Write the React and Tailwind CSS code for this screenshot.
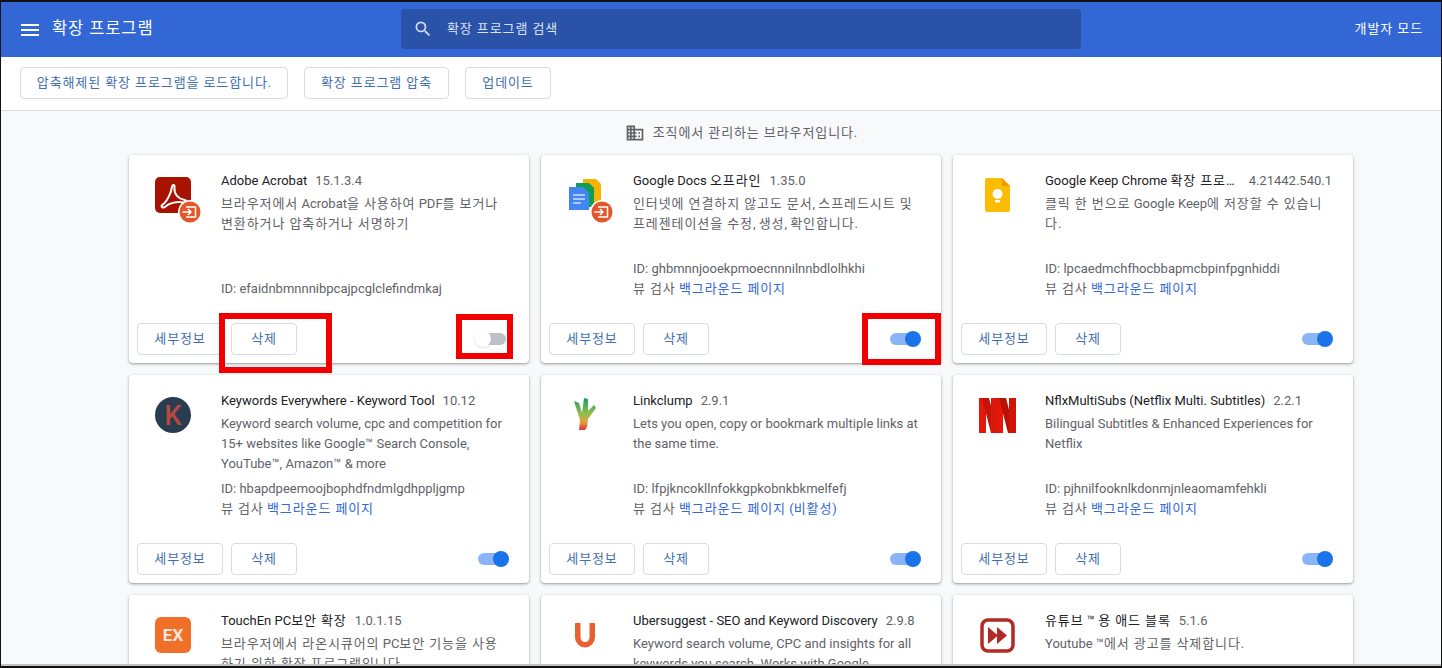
import React from "react";

// Hangul runs render narrower than in the reference, so they get some tracking
const Ko = ({ children }) =>
  String(children)
    .split(/([가-힣]+(?: [가-힣]+)*)/)
    .map((part, i) =>
      i % 2 ? (
        <span key={i} className="tracking-[0.9px]">
          {part}
        </span>
      ) : (
        part
      )
    );

const Badge = () => (
  <g>
    <circle cx="35" cy="35" r="12" fill="#fff" />
    <circle cx="35" cy="35" r="10.5" fill="#e2582c" />
    <path d="M31 30h9.5v10H31" fill="none" stroke="#fff" strokeWidth="1.5" />
    <path d="M27.5 35h8M33 32l3 3-3 3" fill="none" stroke="#fff" strokeWidth="1.5" />
  </g>
);

const AcrobatIcon = () => (
  <svg viewBox="0 0 48 48" className="w-12 h-12 overflow-visible">
    <rect width="36" height="36" rx="5" fill="#a81200" />
    <path
      d="M7 28c4-2 9-11 10-18 .4-3 3-2.500 2.500 1-.8 6 4 11 10 12 3 .5 2.500 3-1 2.500-6-1-14 0-18 4-2.500 2-5 .5-3.500-1.500z"
      fill="none"
      stroke="#fff"
      strokeWidth="2"
    />
    <Badge />
  </svg>
);

const DocsIcon = () => (
  <svg viewBox="0 0 48 48" className="w-12 h-12 overflow-visible">
    <path d="M16 2h13l5 5v19H16z" fill="#f4b400" />
    <path d="M9 6h13l5 5v19H9z" fill="#0f9d58" />
    <path d="M2 10h14l6 6v17H2z" fill="#4285f4" />
    <path d="M6 18h12M6 22h12M6 26h8" stroke="#cfe0fc" strokeWidth="1.500" />
    <Badge />
  </svg>
);

const KeepIcon = () => (
  <svg viewBox="0 0 48 48" className="w-12 h-12">
    <path d="M8 1h15l8 8v24a2 2 0 0 1-2 2H8a2 2 0 0 1-2-2V3a2 2 0 0 1 2-2z" fill="#fbbc04" />
    <path d="M23 1l8 8h-8z" fill="#f29900" />
    <circle cx="18.500" cy="17" r="5" fill="#fff" />
    <rect x="16" y="23" width="5" height="2.500" fill="#fff" />
  </svg>
);

const KeywordsIcon = () => (
  <svg viewBox="0 0 48 48" className="w-12 h-12">
    <circle cx="18" cy="18" r="18" fill="#2a3c50" />
    <text x="18" y="28" textAnchor="middle" fontSize="27" fontWeight="500" fill="#b84a3f" fontFamily="Roboto, sans-serif">
      K
    </text>
  </svg>
);

const LinkclumpIcon = () => (
  <svg viewBox="0 0 48 48" className="w-12 h-12">
    <defs>
      <linearGradient id="clump" x1="0" y1="0" x2="0" y2="1">
        <stop offset="0" stopColor="#1f9a6c" />
        <stop offset="0.5" stopColor="#8fbf4a" />
        <stop offset="0.75" stopColor="#e8a040" />
        <stop offset="1" stopColor="#d8343a" />
      </linearGradient>
    </defs>
    <path
      d="M7 4l5 2 3 10 2-15 4 1 0 12 6-6 2 3-8 11-1 8-2 3-6 0 1-10z"
      fill="url(#clump)"
    />
  </svg>
);

const NflxIcon = () => (
  <svg viewBox="0 0 48 48" className="w-12 h-12">
    <path d="M0 1h7v35H0z" fill="#e3170a" />
    <path d="M3 1h7l9 35h-7z" fill="#c31408" />
    <path d="M12 1h7v35h-7z" fill="#d81a0c" />
    <path d="M17 1h7v35h-7z" fill="#e3170a" />
    <path d="M20 1h7l9 35h-7z" fill="#b81206" />
    <path d="M30 1h7v35h-7z" fill="#d01508" />
  </svg>
);

const TouchEnIcon = () => (
  <svg viewBox="0 0 48 48" className="w-12 h-12">
    <rect width="36" height="36" rx="6" fill="#f0702a" />
    <text x="18" y="24" textAnchor="middle" fontSize="17" fontWeight="700" fill="#f6e6da" fontFamily="Roboto, sans-serif">
      EX
    </text>
  </svg>
);

const UberIcon = () => (
  <svg viewBox="0 0 48 48" className="w-12 h-12">
    <path d="M10.750 6v14.500a7.250 7.250 0 0 0 14.500 0V6" fill="none" stroke="#e8602f" strokeWidth="5.500" />
  </svg>
);

const YoutubeIcon = () => (
  <svg viewBox="0 0 48 48" className="w-12 h-12">
    <rect x="3" y="3" width="31" height="31" rx="6" fill="#fff" stroke="#b02a26" strokeWidth="3.500" />
    <path d="M9 10l10 8.500-10 8.500zM18 10l10 8.500-10 8.500z" fill="#b02a26" />
  </svg>
);

const extensions = [
  {
    name: "Adobe Acrobat",
    version: "15.1.3.4",
    icon: <AcrobatIcon />,
    desc: ["브라우저에서 Acrobat을 사용하여 PDF를 보거나", "변환하거나 압축하거나 서명하기"],
    id: "efaidnbmnnnibpcajpcglclefindmkaj",
    enabled: false,
  },
  {
    name: "Google Docs 오프라인",
    version: "1.35.0",
    icon: <DocsIcon />,
    desc: ["인터넷에 연결하지 않고도 문서, 스프레드시트 및", "프레젠테이션을 수정, 생성, 확인합니다."],
    id: "ghbmnnjooekpmoecnnnilnnbdlolhkhi",
    view: true,
    enabled: true,
  },
  {
    name: "Google Keep Chrome 확장 프로그램",
    version: "4.21442.540.1",
    icon: <KeepIcon />,
    desc: ["클릭 한 번으로 Google Keep에 저장할 수 있습니", "다."],
    id: "lpcaedmchfhocbbapmcbpinfpgnhiddi",
    view: true,
    enabled: true,
  },
  {
    name: "Keywords Everywhere - Keyword Tool",
    version: "10.12",
    icon: <KeywordsIcon />,
    desc: [
      "Keyword search volume, cpc and competition for",
      "15+ websites like Google™ Search Console,",
      "YouTube™, Amazon™ & more",
    ],
    id: "hbapdpeemoojbophdfndmlgdhppljgmp",
    view: true,
    enabled: true,
  },
  {
    name: "Linkclump",
    version: "2.9.1",
    icon: <LinkclumpIcon />,
    desc: ["Lets you open, copy or bookmark multiple links at", "the same time."],
    id: "lfpjkncokllnfokkgpkobnkbkmelfefj",
    view: true,
    inactive: true,
    enabled: true,
  },
  {
    name: "NflxMultiSubs (Netflix Multi. Subtitles)",
    version: "2.2.1",
    icon: <NflxIcon />,
    desc: ["Bilingual Subtitles & Enhanced Experiences for", "Netflix"],
    id: "pjhnilfooknlkdonmjnleaomamfehkli",
    view: true,
    enabled: true,
  },
  {
    name: "TouchEn PC보안 확장",
    version: "1.0.1.15",
    icon: <TouchEnIcon />,
    desc: ["브라우저에서 라온시큐어의 PC보안 기능을 사용", "하기 위한 확장 프로그램입니다."],
    id: "dncepekefegjiljlfbihljgogephdhph",
    enabled: true,
  },
  {
    name: "Ubersuggest - SEO and Keyword Discovery",
    version: "2.9.8",
    icon: <UberIcon />,
    desc: ["Keyword search volume, CPC and insights for all", "keywords you search. Works with Google."],
    id: "mkdhnbkcocnfopdfdjcpkbfbfgmjoeoj",
    enabled: true,
  },
  {
    name: "유튜브 ™ 용 애드 블록",
    version: "5.1.6",
    icon: <YoutubeIcon />,
    desc: ["Youtube ™에서 광고를 삭제합니다."],
    id: "cmedhionkhpnakcndndgjdbohmhepckk",
    enabled: true,
  },
];

const OutlineButton = ({ children, className }) => (
  <button
    className={`h-[32px] bg-white border border-[#dadce0] rounded text-[13px] text-[#3f6fb0] ${className}`}
  >
    <Ko>{children}</Ko>
  </button>
);

const Toggle = ({ on }) => (
  <div className="relative w-[34px] h-[16px] flex items-center justify-center">
    <div className={`w-[28px] h-[12px] rounded-full ${on ? "bg-[#8ab4f8]" : "bg-[#bdc1c6]"}`} />
    {on ? (
      <div className="absolute right-0 w-[16px] h-[16px] rounded-full bg-[#1a73e8]" />
    ) : (
      <div className="absolute left-0 w-[16px] h-[16px] rounded-full bg-white shadow" />
    )}
  </div>
);

const ExtensionCard = ({ ext }) => (
  <div className="h-[208px] bg-white rounded flex flex-col shadow-[0_1px_2px_rgba(60,64,67,0.35),0_1px_3px_1px_rgba(60,64,67,0.15)]">
    <div className="h-[168px] flex pl-[26px] pt-[16px]">
      <div className="w-12 h-12 mt-[6px] mr-[18px] shrink-0">{ext.icon}</div>
      <div className="w-[287px] h-[128px] flex flex-col text-[13px] leading-[20px] text-[#5f6368]">
        <div className="flex gap-2 mb-[3px]">
          <span className="text-[#202124] truncate min-w-0">
            <Ko>{ext.name}</Ko>
          </span>
          <span className="shrink-0">{ext.version}</span>
        </div>
        {ext.desc.map((line, i) => (
          <div key={i} className="whitespace-nowrap">
            <Ko>{line}</Ko>
          </div>
        ))}
        <div className="mt-auto">
          <div>ID: {ext.id}</div>
          {ext.view && (
            <div>
              <Ko>뷰 검사</Ko>{" "}
              <span className="text-[#3367d6]">
                <Ko>백그라운드 페이지</Ko>
              </span>
              {ext.inactive && (
                <span className="text-[#3367d6]">
                  {" "}
                  <Ko>(비활성)</Ko>
                </span>
              )}
            </div>
          )}
        </div>
      </div>
    </div>
    <div className="flex items-center pl-2 pr-[20px]">
      <div className="flex gap-2">
        <OutlineButton className="w-[86px]">세부정보</OutlineButton>
        <OutlineButton className="w-[66px]">삭제</OutlineButton>
      </div>
      <div className="ml-auto">
        <Toggle on={ext.enabled} />
      </div>
    </div>
  </div>
);

export default function App() {
  return (
    <div className="relative w-[1442px] h-[668px] bg-white overflow-hidden font-[Roboto,'Noto_Sans_CJK_KR',sans-serif]">
      <div className="h-[668px] flex flex-col border-t-2 border-b-2 border-x border-[#111]">
        <header className="h-[55px] shrink-0 bg-[#3367d6] flex items-center text-white">
          <svg viewBox="0 0 24 24" className="w-6 h-6 ml-[17px] mr-[10px]" fill="#fff">
            <path d="M3 18h18v-2H3v2zm0-5h18v-2H3v2zm0-7v2h18V6H3z" />
          </svg>
          <div className="w-[349px] text-[16.5px]">
            <Ko>확장 프로그램</Ko>
          </div>
          <div className="w-[680px] h-[40px] -mt-[1px] bg-[#2a52a8] rounded-sm flex items-center pl-[12px]">
            <svg viewBox="0 0 24 24" className="w-[20px] h-[20px] mr-[14px]" fill="#d5def2">
              <path d="M15.500 14h-.79l-.28-.27A6.470 6.470 0 0 0 16 9.500 6.500 6.500 0 1 0 9.500 16c1.610 0 3.090-.59 4.230-1.570l.27.28v.79l5 4.990L20.490 19l-4.990-5zm-6 0C7.010 14 5 11.990 5 9.500S7.010 5 9.500 5 14 7.010 14 9.500 11.990 14 9.500 14z" />
            </svg>
            <span className="text-[13px] text-[#dbe3f5]">
              <Ko>확장 프로그램 검색</Ko>
            </span>
          </div>
          <div className="ml-auto mr-[18px] -mt-[2px] text-[13px]">
            <Ko>개발자 모드</Ko>
          </div>
        </header>

        <div className="h-[54px] shrink-0 bg-white border-b border-[#dadce0] flex items-start gap-4 pl-[19px] pt-[10px]">
          <OutlineButton className="w-[268px]">압축해제된 확장 프로그램을 로드합니다.</OutlineButton>
          <OutlineButton className="w-[145px]">확장 프로그램 압축</OutlineButton>
          <OutlineButton className="w-[86px]">업데이트</OutlineButton>
        </div>

        <main className="flex-1 min-h-0 overflow-hidden bg-[#f8f9fa] border-b-2 border-[#c4c4c4] pl-[128px]">
          <div className="w-[1224px] h-[44px] flex items-center justify-center gap-[8px] text-[13px] text-[#5f6368]">
            <svg viewBox="0 0 24 24" className="w-[20px] h-[20px]" fill="#5f6368">
              <path d="M12 7V3H2v18h20V7H12zM6 19H4v-2h2v2zm0-4H4v-2h2v2zm0-4H4V9h2v2zm0-4H4V5h2v2zm4 12H8v-2h2v2zm0-4H8v-2h2v2zm0-4H8V9h2v2zm0-4H8V5h2v2zm10 12h-8v-2h2v-2h-2v-2h2v-2h-2V9h8v10zm-2-8h-2v2h2v-2zm0 4h-2v2h2v-2z" />
            </svg>
            <span>
              <Ko>조직에서 관리하는 브라우저입니다.</Ko>
            </span>
          </div>
          <div className="grid grid-cols-[400px_400px_400px] gap-3">
            {extensions.map((ext) => (
              <ExtensionCard key={ext.name} ext={ext} />
            ))}
          </div>
        </main>
      </div>

      {/* red highlight boxes */}
      <div className="absolute left-[219px] top-[313px] w-[113px] h-[60px] border-[6px] border-[#f00000]" />
      <div className="absolute left-[456px] top-[314px] w-[57px] h-[45px] border-[6px] border-[#f00000]" />
      <div className="absolute left-[862px] top-[313px] w-[79px] h-[52px] border-[6px] border-[#f00000]" />
    </div>
  );
}
